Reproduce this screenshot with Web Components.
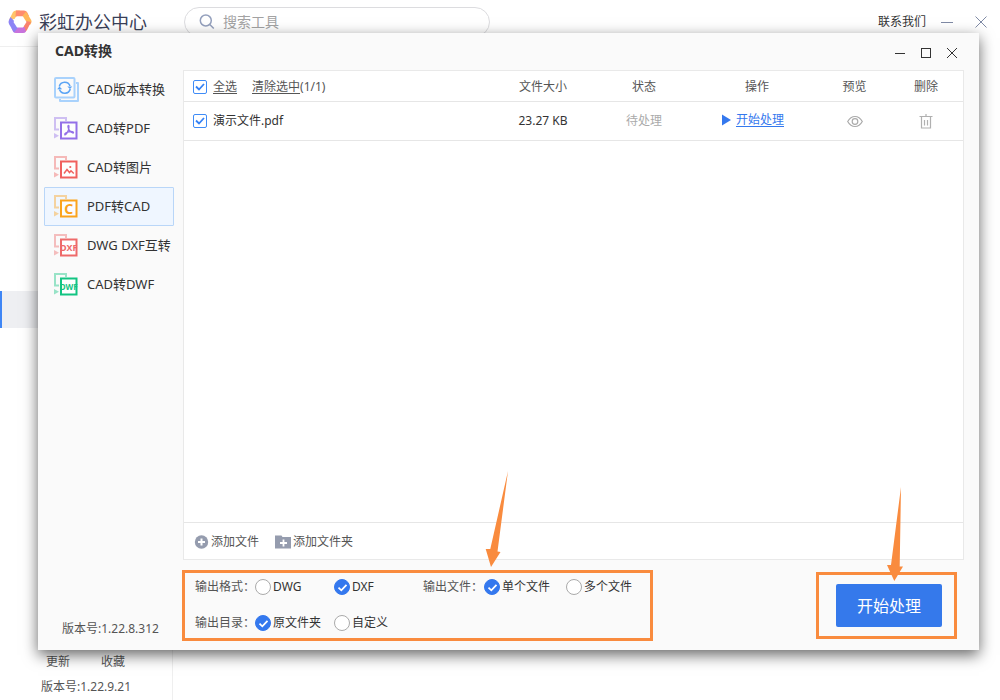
<!DOCTYPE html>
<html lang="zh-CN">
<head>
<meta charset="utf-8">
<meta name="viewport" content="width=device-width, initial-scale=1">
<title>彩虹办公中心</title>
<style>
  html, body { height: 100%; }
  body {
    margin: 0;
    background: #fff;
    color: #333;
    font: 12px/20px "Noto Sans", "Noto Sans CJK SC", sans-serif;
  }
</style>
</head>
<body>
<office-app></office-app>

<script>
const base = `
  *, *::before, *::after { box-sizing: border-box; }
  button { font: inherit; color: inherit; background: none; border: 0; padding: 0; margin: 0; cursor: pointer; }
  svg { display: block; flex: none; }
`;

function define(name, html) {
  const template = document.createElement('template');
  template.innerHTML = html;
  customElements.define(name, class extends HTMLElement {
    constructor() {
      super();
      this.attachShadow({ mode: 'open' }).append(template.content.cloneNode(true));
    }
  });
}

/* Paired-sheet frame shared by the conversion icons */
const sheets = (color, inner) => `
  <svg width="25" height="25" viewBox="0 0 25 25" fill="none" aria-hidden="true">
    <g opacity=".42"><path d="M5 13.5H1V2H12V5" stroke="${color}" stroke-width="2"/><path d="M0 17l5 2.8-5 2.7z" fill="${color}"/></g>
    <rect x="7" y="6.5" width="15.5" height="16" fill="#fff" fill-opacity=".7" stroke="${color}" stroke-width="2"/>
    ${inner}
  </svg>`;

const icons = {
  version: `
    <svg width="25" height="25" viewBox="0 0 25 25" fill="none" aria-hidden="true">
      <rect x="1" y="1" width="19.5" height="19.5" rx="1" stroke="#a9d2fc" stroke-width="2"/>
      <path d="M22 6h2v18H6v-2" stroke="#a9d2fc" stroke-width="2" stroke-linejoin="round"/>
      <path d="M5.3 9.5A5.6 5.6 0 0 1 16 9M16.2 12A5.6 5.6 0 0 1 5.5 12.6" stroke="#5aa4f5" stroke-width="1.6"/>
      <path d="M13.3 9.5h5l-2.3 2.6zM3.2 12.2h5l-2.7-2.7z" fill="#5aa4f5"/>
    </svg>`,
  pdf: sheets('#9470e8', `<path d="M14.6 9.5c-1.3 0-.4 2.900.5 4.400 1.100 2 3.300 3.400 4.300 3 .8-1.300-2.300-1.700-4.700-1.100-2.400.5-4.500 1.900-3.900 3 1 .5 2.600-2 3.500-4.600.7-2 .9-4.700.3-4.700z" stroke="#9470e8" stroke-width="1.300"/>`),
  image: sheets('#f0605e', `<path d="M10 18.500l3-4 2.500 3 1.500-1.700 2.800 2.700" stroke="#f0605e" stroke-width="1.500"/><circle cx="16.300" cy="12" r="1.100" fill="#f0605e"/>`),
  cad: sheets('#fba31c', `<text x="14.800" y="19.500" text-anchor="middle" font-family="Noto Sans, sans-serif" font-weight="700" font-size="14" fill="#fba31c">C</text>`),
  dxf: sheets('#ee6a6a', `<text x="14.800" y="18" text-anchor="middle" font-family="Noto Sans, sans-serif" font-weight="700" font-size="9" fill="#ee6a6a">DXF</text>`),
  dwf: sheets('#12c482', `<text x="14.800" y="18" text-anchor="middle" font-family="Noto Sans, sans-serif" font-weight="700" font-size="8" fill="#12c482">DWF</text>`)
};

customElements.define('nav-item', class extends HTMLElement {
  constructor() {
    super();
    this.attachShadow({ mode: 'open' }).innerHTML = `
      <style>${base}
        :host { display: block; }
        button {
          display: flex; align-items: center; gap: 8px;
          width: 100%; height: 39px; padding: 0 0 1px 9px;
          border: 1px solid transparent;
          font-size: 13px; white-space: nowrap; text-align: left;
        }
        :host([selected]) button { background: #eff6ff; border-color: #b9d6f8; border-radius: 1px; }
      </style>
      <button type="button">${icons[this.getAttribute('icon')]}<slot></slot></button>`;
  }
});

define('app-header', `
  <style>${base}
    :host { display: flex; align-items: center; height: 46px; padding: 0 12px 3px 8px; }
    h1 { margin: 0 0 0 7px; width: 108px; font-size: 18px; font-weight: 400; line-height: 24px; color: #3a4058; white-space: nowrap; }
    .search {
      display: flex; align-items: center; gap: 8px;
      width: 306px; height: 30px; margin-left: 37px; padding: 0 14px;
      border: 1px solid #dcdcdf; border-radius: 15px;
    }
    input { flex: 1; min-width: 0; border: 0; padding: 0; outline: 0; background: none; font: inherit; font-size: 14px; }
    input::placeholder { color: #a3a3a3; }
    nav { display: flex; align-items: center; gap: 20px; margin-left: auto; }
    a { margin-right: -6px; color: #333; text-decoration: none; white-space: nowrap; }
  </style>
  <svg width="24" height="24" viewBox="0 0 24 24" aria-hidden="true">
    <path fill="#ffc46b" d="M1 10L5 2Q6 .500 8 .500h4L6.500 9z"/>
    <path fill="#ff8c6e" d="M8 .500h8q2 0 3 1.500L21 6l-5.500.500H7.500z"/>
    <path fill="#ffb75a" d="M18 1.500l5.200 8.500q.8 1.500 0 3L22 15l-5.500-3-2-6z"/>
    <path fill="#f9826e" d="M23 12l-4 8q-1 2-3 2l-3.500.500L16 15l2-4z"/>
    <path fill="#c873dc" d="M18 21.500q-1 1.500-3 1.500H8q-2 0-3-1.500L3.500 18l5-1h8z"/>
    <path fill="#8d83f5" d="M6 22.500L1 14q-1-2 0-4l1.500-3L7 12l3 5.500z"/>
    <path fill="#fff" d="M9 6.500h6l3.500 5.500-3.500 5.500H9L5.500 12z"/>
  </svg>
  <h1>彩虹办公中心</h1>
  <label class="search">
    <svg width="16" height="16" viewBox="0 0 16 16" fill="none" stroke="#94a0bd" stroke-width="1.500" aria-hidden="true"><circle cx="6.800" cy="6.500" r="5.500"/><path d="M10.800 10.500l4 4"/></svg>
    <input type="search" placeholder="搜索工具" aria-label="搜索工具">
  </label>
  <nav>
    <a href="#contact">联系我们</a>
    <button type="button" aria-label="最小化"><svg width="14" height="14" viewBox="0 0 14 14" stroke="#7f8aa5"><path d="M1 7.500h12"/></svg></button>
    <button type="button" aria-label="关闭"><svg width="14" height="14" viewBox="0 0 14 14" stroke="#7f8aa5"><path d="M1.500 1.500l11 11M12.500 1.500l-11 11"/></svg></button>
  </nav>
`);

define('app-sidebar', `
  <style>${base}
    :host { display: flex; flex-direction: column; border: solid #efefef; border-width: 1px 1px 0 0; color: #555; }
    .current { height: 37px; margin-top: 244px; background: #eeeff2; border-left: 2px solid #3f86f5; }
    .links { display: flex; gap: 31px; margin: auto 0 5px 46px; }
    a { color: #555; text-decoration: none; }
    p { margin: 0 0 3px 41px; }
  </style>
  <div class="current"></div>
  <div class="links"><a href="#update">更新</a><a href="#favorites">收藏</a></div>
  <p>版本号:1.22.9.21</p>
`);

define('file-panel', `
  <style>${base}
    :host { display: flex; flex-direction: column; background: #fff; border: 1px solid #e9e9e9; min-height: 0; }
    table { width: 100%; border-collapse: separate; border-spacing: 0; table-layout: fixed; }
    th, td { padding: 0; text-align: center; font-weight: 400; border-bottom: 1px solid #e6e6e6; }
    th { height: 31px; padding-top: 1px; color: #555; }
    td { height: 39px; }
    th:first-child, td:first-child { text-align: left; }
    .size { width: 102px; } .state { width: 100px; } .act { width: 126px; } .view { width: 69px; } .del { width: 74px; }
    .pick { display: flex; align-items: center; padding-left: 9px; }
    .pick label { display: flex; align-items: center; gap: 6px; }
    th .pick label span, .clear { text-decoration: underline; text-underline-offset: 2px; }
    .clear { margin-left: 15px; }
    input {
      appearance: none; width: 14px; height: 14px; margin: 0;
      border: 1px solid #3f8cf7; border-radius: 2px; background: #fff;
    }
    input:checked { background: url('data:image/svg+xml,<svg xmlns="http://www.w3.org/2000/svg" viewBox="0 0 12 12"><path d="M2 5.500l3 3 5-5.500" fill="none" stroke="%233582f5" stroke-width="1.800"/></svg>') center / 12px 12px no-repeat; }
    .pending { color: #aaa; }
    a { display: inline-flex; align-items: center; gap: 5px; color: #3478ee; text-decoration: none; margin-right: 8px; }
    a span { text-decoration: underline; text-underline-offset: 2px; }
    td button { display: block; margin: auto; }
    footer { display: flex; gap: 16px; margin-top: auto; height: 37px; padding: 2px 0 0 10px; border-top: 1px solid #e6e6e6; color: #555; }
    footer button { display: flex; align-items: center; gap: 2px; }
  </style>
  <table>
    <thead>
      <tr>
        <th scope="col"><div class="pick"><label><input type="checkbox" checked><span>全选</span></label><button type="button" class="clear">清除选中</button>(1/1)</div></th>
        <th scope="col" class="size">文件大小</th>
        <th scope="col" class="state">状态</th>
        <th scope="col" class="act">操作</th>
        <th scope="col" class="view">预览</th>
        <th scope="col" class="del">删除</th>
      </tr>
    </thead>
    <tbody>
      <tr>
        <td><div class="pick"><label><input type="checkbox" checked><span>演示文件.pdf</span></label></div></td>
        <td>23.27 KB</td>
        <td class="pending">待处理</td>
        <td><a href="#start"><svg width="9" height="12" viewBox="0 0 9 12"><path d="M0 .500l9 5.500-9 5.500z" fill="#3478ee"/></svg><span>开始处理</span></a></td>
        <td><button type="button" aria-label="预览"><svg width="16" height="14" viewBox="0 0 16 14" fill="none" stroke="#aaa" stroke-width="1.200"><path d="M.700 7.500Q3.500 2.500 8 2.500t7.300 5Q12.500 12.500 8 12.500T.700 7.500z"/><circle cx="8" cy="7.500" r="2.800"/></svg></button></td>
        <td><button type="button" aria-label="删除"><svg width="14" height="16" viewBox="0 0 14 16" fill="none" stroke="#b0b0b0" stroke-width="1.200"><path d="M.500 3.500h13M2.500 3.500v11.500h9V3.500M7 3V1M5.500 7v5.500M8.500 7v5.500"/></svg></button></td>
      </tr>
    </tbody>
  </table>
  <footer>
    <button type="button"><svg width="15" height="14" viewBox="0 0 15 14"><circle cx="7.500" cy="7" r="6.700" fill="#959cae"/><path d="M7.500 3.500v7M4 7h7" stroke="#fff" stroke-width="2"/></svg>添加文件</button>
    <button type="button"><svg width="16" height="14" viewBox="0 0 16 14"><path d="M0 .500h6.500l1 1.500H16v11.500H0z" fill="#959cae"/><path d="M8.500 4.500v7M5 8h7" stroke="#fff" stroke-width="1.800"/></svg>添加文件夹</button>
  </footer>
`);

define('export-settings', `
  <style>${base}
    :host {
      display: grid; position: relative;
      grid-template-columns: 60px 79px 89px 61px 82px auto;
      grid-auto-rows: 20px; row-gap: 16px; justify-content: start;
      width: 471px; padding: 4px 0 5px 10px; border: 3px solid #f98b3e;
    }
    .group { display: contents; }
    .name { color: #555; white-space: nowrap; }
    label { display: flex; align-items: center; gap: 2px; white-space: nowrap; }
    input {
      appearance: none; width: 16px; height: 16px; margin: 0; flex: none;
      border: 1px solid #aaa; border-radius: 50%; background: #fff;
    }
    input:checked { border-color: #3478ee; background: #3478ee url('data:image/svg+xml,<svg xmlns="http://www.w3.org/2000/svg" viewBox="0 0 13 13"><path d="M2.500 6.700l2.800 2.600 5.200-5.500" fill="none" stroke="%23fff" stroke-width="1.800"/></svg>') center / 13px 13px no-repeat; }
    .arrow { position: absolute; left: 300px; top: -103px; pointer-events: none; }
  </style>
  <div class="group" role="radiogroup" aria-label="输出格式">
    <span class="name">输出格式：</span>
    <label><input type="radio" name="format">DWG</label>
    <label><input type="radio" name="format" checked>DXF</label>
  </div>
  <div class="group" role="radiogroup" aria-label="输出文件">
    <span class="name">输出文件：</span>
    <label><input type="radio" name="files" checked>单个文件</label>
    <label><input type="radio" name="files">多个文件</label>
  </div>
  <div class="group" role="radiogroup" aria-label="输出目录">
    <span class="name">输出目录：</span>
    <label><input type="radio" name="folder" checked>原文件夹</label>
    <label><input type="radio" name="folder">自定义</label>
  </div>
  <svg class="arrow" width="25" height="98" viewBox="0 0 25 98" aria-hidden="true"><path d="M23 1L12.500 81.500l3 .500L6 97 .700 79h4.600z" fill="#f98b3e"/></svg>
`);

define('start-action', `
  <style>${base}
    :host { display: block; position: relative; padding: 9px 12px 9px 17px; border: 3px solid #f98b3e; }
    button { display: block; width: 106px; height: 43px; background: #3579eb; color: #fff; border-radius: 2px; font-size: 16px; }
    .arrow { position: absolute; left: 67px; top: -89px; pointer-events: none; }
  </style>
  <button type="button"><slot></slot></button>
  <svg class="arrow" width="18" height="96" viewBox="0 0 18 96" aria-hidden="true"><path d="M15 1l-1.300 79.500H17L8.300 95 1 79h4z" fill="#f98b3e"/></svg>
`);

define('convert-dialog', `
  <style>${base}
    :host {
      display: grid; grid-template: 37px minmax(0, 1fr) / 145px minmax(0, 1fr);
      padding-right: 15px; background: #fafafa;
      box-shadow: 0 5px 14px rgba(0, 0, 0, .6);
    }
    header { grid-column: 1 / -1; display: flex; align-items: center; justify-content: space-between; padding: 0 5px 2px 17px; }
    h2 { margin: 0; font-size: 14px; line-height: 20px; font-weight: 700; }
    .controls { display: flex; gap: 12px; padding-top: 5px; }
    aside { display: flex; flex-direction: column; padding: 0 9px 11px 6px; }
    aside p { margin: auto 0 0 18px; color: #555; white-space: nowrap; }
    main { display: flex; flex-direction: column; min-height: 0; }
    file-panel { flex: 1; }
    .actions { display: flex; align-items: center; justify-content: space-between; margin: 10px 7px 9px -1px; }
  </style>
  <header>
    <h2>CAD转换</h2>
    <div class="controls">
      <button type="button" aria-label="最小化"><svg width="14" height="14" viewBox="0 0 14 14" stroke="#333"><path d="M2 7.500h10"/></svg></button>
      <button type="button" aria-label="最大化"><svg width="14" height="14" viewBox="0 0 14 14" stroke="#333" fill="none"><rect x="2.500" y="2.500" width="9" height="9"/></svg></button>
      <button type="button" aria-label="关闭"><svg width="14" height="14" viewBox="0 0 14 14" stroke="#333"><path d="M2 2l10 10M12 2L2 12"/></svg></button>
    </div>
  </header>
  <aside>
    <nav-item icon="version">CAD版本转换</nav-item>
    <nav-item icon="pdf">CAD转PDF</nav-item>
    <nav-item icon="image">CAD转图片</nav-item>
    <nav-item icon="cad" selected>PDF转CAD</nav-item>
    <nav-item icon="dxf">DWG DXF互转</nav-item>
    <nav-item icon="dwf">CAD转DWF</nav-item>
    <p>版本号:1.22.8.312</p>
  </aside>
  <main>
    <file-panel></file-panel>
    <div class="actions">
      <export-settings></export-settings>
      <start-action>开始处理</start-action>
    </div>
  </main>
`);

define('office-app', `
  <style>${base}
    :host { display: grid; grid-template: auto minmax(0, 1fr) / 173px minmax(0, 1fr); height: 100vh; min-height: 560px; position: relative; overflow: hidden; }
    app-header { grid-column: 1 / -1; }
    convert-dialog { position: absolute; inset: 33px 21px 50px 38px; }
  </style>
  <app-header></app-header>
  <app-sidebar></app-sidebar>
  <convert-dialog role="dialog" aria-label="CAD转换"></convert-dialog>
`);
</script>
</body>
</html>
